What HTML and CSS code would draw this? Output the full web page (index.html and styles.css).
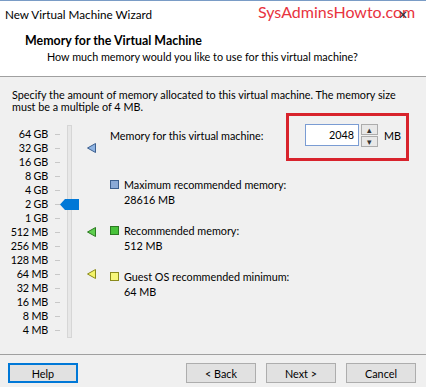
FILE: index.html
```html
<!DOCTYPE html>
<html lang="en">
<head>
  <meta charset="UTF-8" />
  <title>New Virtual Machine Wizard</title>
  <link rel="stylesheet" href="styles.css">
</head>
<body>

  <!-- Title bar -->
  <div class="titlebar">
    <span class="title">New Virtual Machine Wizard</span>
    <span class="watermark">SysAdminsHowto.com</span>
    <span class="close">&#x2715;</span>
  </div>

  <!-- Header -->
  <div class="header">
    <div class="heading">Memory for the Virtual Machine</div>
    <div class="subheading">How much memory would you like to use for this virtual machine?</div>
  </div>

  <!-- Body -->
  <div class="content">
    <p class="intro">Specify the amount of memory allocated to this virtual machine. The memory size must be a multiple of 4 MB.</p>

    <div class="main">
      <div class="slider">
        <div class="track"></div>
        <div class="thumb">
          <svg width="19" height="11" viewBox="0 0 19 11"><path d="M0 5.5 L5 0 H19 V11 H5 Z" fill="#0078d7"/></svg>
        </div>

        <span class="lbl r1">64 GB</span><span class="tick r1"></span>
        <span class="lbl r2">32 GB</span><span class="tick r2"></span>
        <span class="lbl r3">16 GB</span><span class="tick r3"></span>
        <span class="lbl r4">8 GB</span><span class="tick r4"></span>
        <span class="lbl r5">4 GB</span><span class="tick r5"></span>
        <span class="lbl r6">2 GB</span><span class="tick r6"></span>
        <span class="lbl r7">1 GB</span><span class="tick r7"></span>
        <span class="lbl r8">512 MB</span><span class="tick r8"></span>
        <span class="lbl r9">256 MB</span><span class="tick r9"></span>
        <span class="lbl r10">128 MB</span><span class="tick r10"></span>
        <span class="lbl r11">64 MB</span><span class="tick r11"></span>
        <span class="lbl r12">32 MB</span><span class="tick r12"></span>
        <span class="lbl r13">16 MB</span><span class="tick r13"></span>
        <span class="lbl r14">8 MB</span><span class="tick r14"></span>
        <span class="lbl r15">4 MB</span><span class="tick r15"></span>

        <span class="marker r2">
          <svg width="9" height="10" viewBox="0 0 9 10"><path d="M0.5 5 L8.5 0.5 V9.5 Z" fill="#8fb4e3" stroke="#3c5f8f"/></svg>
        </span>
        <span class="marker r8">
          <svg width="9" height="10" viewBox="0 0 9 10"><path d="M0.5 5 L8.5 0.5 V9.5 Z" fill="#5fcf4f" stroke="#2c7a22"/></svg>
        </span>
        <span class="marker r11">
          <svg width="9" height="10" viewBox="0 0 9 10"><path d="M0.5 5 L8.5 0.5 V9.5 Z" fill="#f3f36a" stroke="#8a8a1c"/></svg>
        </span>
      </div>

      <div class="details">
        <div class="mem-row">
          <span class="mem-label">Memory for this virtual machine:</span>
          <div class="spin-group">
            <div class="spin">
              <span class="spin-value">2048</span>
              <div class="spin-btns">
                <span class="spin-btn">&#9652;</span>
                <span class="spin-btn">&#9662;</span>
              </div>
            </div>
            <span class="unit">MB</span>
          </div>
        </div>

        <div class="legend">
          <span class="swatch blue"></span>
          <div>Maximum recommended memory:<br>28616 MB</div>
        </div>
        <div class="legend">
          <span class="swatch green"></span>
          <div>Recommended memory:<br>512 MB</div>
        </div>
        <div class="legend">
          <span class="swatch yellow"></span>
          <div>Guest OS recommended minimum:<br>64 MB</div>
        </div>
      </div>
    </div>
  </div>

  <!-- Footer -->
  <div class="footer">
    <button class="btn focused">Help</button>
    <div class="nav-btns">
      <button class="btn">&lt; Back</button>
      <button class="btn">Next &gt;</button>
      <button class="btn">Cancel</button>
    </div>
  </div>

</body>
</html>
```

FILE: styles.css
```css
body {
  margin: 0; width: 426px; height: 387px; overflow: hidden;
  font-family: 'Lato', sans-serif; font-size: 10.8px; color: #000;
  background: #f0f0f0; box-sizing: border-box;
  border-top: 1px solid #7a9cc6;
}

.titlebar {
  display: flex; align-items: center; height: 25px;
  padding-left: 5px; background: #fff; position: relative;
}
.title { font-size: 11.7px; color: #000; }
.watermark {
  position: absolute; left: 258px; top: 1px;
  font-family: 'Lato', sans-serif; font-size: 16px; color: #e8333e;
}
.close { position: absolute; left: 398px; top: 6px; font-size: 12px; color: #333; }

.header {
  background: #fff; height: 51px; box-sizing: border-box;
  padding: 7px 0 0 25px; border-bottom: 1px solid #a0a0a0;
}
.heading { font-weight: bold; font-size: 12.4px; line-height: 16px; }
.subheading { padding-left: 22px; line-height: 16px; }

.content { padding: 12px 12px 0; }
.intro { margin: 0; line-height: 12px; }

.main { display: flex; margin-top: 8px; }

.slider {
  display: grid; position: relative;
  grid-template-columns: 44px 7px 5px 19px 8px 9px;
  grid-template-rows: repeat(15, 14px);
  margin: 6px 0 0 -8px;
}
.lbl {
  grid-column: 1; text-align: right; align-self: center;
  line-height: 14px; white-space: nowrap; letter-spacing: -0.2px;
}
.tick { grid-column: 3; align-self: center; height: 1px; background: #c8c8c8; }
.marker { grid-column: 6; align-self: center; display: flex; }
.track {
  grid-column: 4; grid-row: 1 / -1; justify-self: center;
  width: 3px; margin: -2px 0 -1px; background: #e7e7e7; border: 1px solid #d6d6d6;
}
.thumb { grid-column: 4; grid-row: 6; align-self: center; display: flex; z-index: 1; }

.r1 { grid-row: 1; } .r2 { grid-row: 2; } .r3 { grid-row: 3; }
.r4 { grid-row: 4; } .r5 { grid-row: 5; } .r6 { grid-row: 6; }
.r7 { grid-row: 7; } .r8 { grid-row: 8; } .r9 { grid-row: 9; }
.r10 { grid-row: 10; } .r11 { grid-row: 11; } .r12 { grid-row: 12; }
.r13 { grid-row: 13; } .r14 { grid-row: 14; } .r15 { grid-row: 15; }

.details { margin: 3px 0 0 14px; display: flex; flex-direction: column; }

.mem-row { display: flex; align-items: center; height: 22px; margin-bottom: 15px; }
.mem-label { width: 195px; flex: none; white-space: nowrap; }
.spin-group { display: flex; align-items: center; position: relative; }
.spin-group::before {
  content: ""; position: absolute; left: -19px; top: -11px;
  width: 117px; height: 42px; border: 3px solid #d8232c;
}
.spin { display: flex; align-items: center; }
.spin-value {
  width: 48px; height: 20px; line-height: 20px; padding-right: 4px;
  text-align: right; background: #fff; border: 1px solid #7a9cd3;
}
.spin-btns { display: flex; flex-direction: column; gap: 1px; margin-left: 2px; }
.spin-btn {
  width: 15px; height: 9px; line-height: 9px; font-size: 9px; text-align: center;
  background: #e8e8e8; border: 1px solid #acacac; color: #333;
}
.unit { margin-left: 6px; }

.legend { display: flex; align-items: flex-start; line-height: 15px; margin-top: 16px; }
.swatch { width: 7px; height: 7px; margin: 3px 5px 0 0; border: 1px solid #555; }
.swatch.blue { background: #8aa9d6; border-color: #3c5f8f; }
.swatch.green { background: #48c23a; border-color: #2c7a22; }
.swatch.yellow { background: #f6f67a; border-color: #8a8a1c; }

.footer {
  position: absolute; left: 0; right: 0; top: 354px;
  display: flex; justify-content: space-between; align-items: flex-start;
  padding: 8px 10px 0 8px; border-top: 1px solid #a0a0a0;
}
.nav-btns { display: flex; gap: 10px; }
.btn {
  width: 70px; height: 20px; padding: 0; font: inherit; color: #000;
  background: #e1e1e1; border: 1px solid #adadad;
}
.btn.focused { border: 2px solid #0078d7; }
```
